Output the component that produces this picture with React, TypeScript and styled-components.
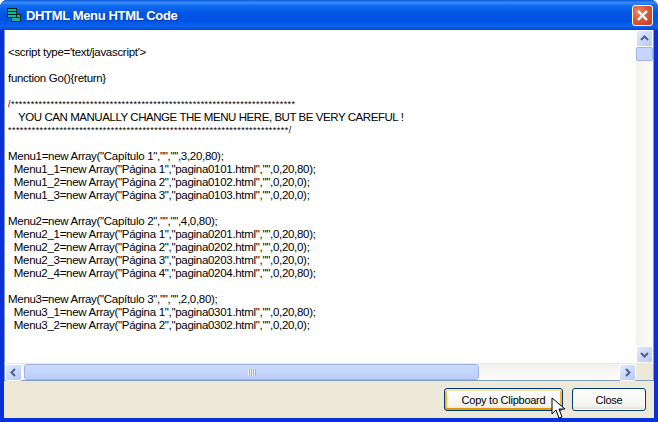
import React from "react";
import styled, { createGlobalStyle } from "styled-components";

const GlobalStyle = createGlobalStyle`
  * {
    box-sizing: border-box;
    margin: 0;
    padding: 0;
  }

  html, body, #root {
    width: 658px;
    height: 422px;
    overflow: hidden;
    background: #fff;
  }
`;

const Window = styled.div`
  position: relative;
  width: 658px;
  height: 422px;
  display: flex;
  flex-direction: column;
  border-radius: 7px 7px 0 0;
  overflow: hidden;
  background: #0831d9;
`;

const TitleBar = styled.div`
  height: 30px;
  flex: none;
  display: flex;
  align-items: center;
  gap: 4px;
  padding: 0 5px 0 6px;
  background: linear-gradient(
    180deg,
    #0a5be0 0%,
    #3c8cf6 9%,
    #0f6df0 18%,
    #0255e3 45%,
    #0054e3 70%,
    #0a62ef 88%,
    #0647cf 100%
  );
`;

const Title = styled.span`
  flex: 1;
  margin-top: 1px;
  color: #fff;
  font: bold 13px "Liberation Sans", Arial, sans-serif;
  letter-spacing: -0.35px;
  text-shadow: 1px 1px 0 #0b3cae;
`;

const CloseBox = styled.div`
  width: 21px;
  height: 21px;
  display: flex;
  align-items: center;
  justify-content: center;
  border: 1px solid #fff;
  border-radius: 3px;
  background: radial-gradient(circle at 30% 30%, #e98a68 0%, #d9583a 45%, #c23a18 100%);
`;

const Body = styled.div`
  flex: 1;
  min-height: 0;
  display: flex;
  flex-direction: column;
  margin: 0 4px 4px;
  background: #ece9d8;
`;

const ViewRow = styled.div`
  flex: 1;
  min-height: 0;
  display: flex;
  background: #fff;
  border-left: 1px solid #7f9db9;
  border-right: 1px solid #7f9db9;
`;

const Code = styled.div`
  flex: 1;
  overflow: hidden;
  padding: 3px 0 0 3px;
  background: #fff;
  color: #000;
  font: 11.5px/13px "Liberation Sans", Arial, sans-serif;
  letter-spacing: -0.3px;
  white-space: pre;
`;

const Stars = styled.div`
  font-size: 9px;
  line-height: 13px;
  letter-spacing: 0.45px;
`;

const Banner = styled.div`
  padding-left: 2px;
  letter-spacing: -0.44px;
`;

const VTrack = styled.div`
  width: 17px;
  flex: none;
  display: flex;
  flex-direction: column;
  background: linear-gradient(90deg, #f3f1ec 0%, #fdfdfa 100%);
`;

const VSpacer = styled.div`
  flex: 1;
`;

const ScrollBtn = styled.div`
  width: 17px;
  height: 17px;
  flex: none;
  display: flex;
  align-items: center;
  justify-content: center;
  border: 1px solid #fff;
  border-radius: 2px;
  background: linear-gradient(135deg, #e1eafe 0%, #c8d6fb 60%, #b4c8f6 100%);
`;

const VThumb = styled.div`
  width: 17px;
  height: 14px;
  flex: none;
  border: 1px solid #fff;
  outline: 1px solid #9db3e6;
  outline-offset: -1px;
  border-radius: 2px;
  background: #c5d5fb;
`;

const HRow = styled.div`
  height: 18px;
  flex: none;
  display: flex;
  background: #fdfdfa;
  border: 1px solid #7f9db9;
  border-top-color: #ece9d8;
`;

const HTrack = styled.div`
  flex: 1;
  display: flex;
  background: linear-gradient(180deg, #f3f1ec 0%, #fdfdfa 100%);
`;

const HThumb = styled.div`
  width: 455px;
  margin-left: 2px;
  display: flex;
  align-items: center;
  justify-content: center;
  gap: 1px;
  border: 1px solid #fff;
  outline: 1px solid #9db3e6;
  outline-offset: -1px;
  border-radius: 3px;
  background: linear-gradient(180deg, #cbdafd 0%, #c3d3fc 60%, #b9ccf8 100%);
`;

const Grip = styled.i`
  display: block;
  width: 1px;
  height: 7px;
  background: #eef4fe;
  box-shadow: 1px 0 0 #8cb0f8;
`;

const Corner = styled.div`
  width: 17px;
  flex: none;
  background: #ece9d8;
`;

const Footer = styled.div`
  height: 37px;
  flex: none;
  display: flex;
  justify-content: flex-end;
  align-items: center;
  gap: 9px;
  padding: 0 8px 0 0;
  background: #ece9d8;
`;

const Btn = styled.button<{ $focused?: boolean; $w: number }>`
  width: ${(p) => p.$w}px;
  height: 23px;
  border: 1px solid #003c74;
  border-radius: 3px;
  background: linear-gradient(180deg, #ffffff 0%, #f4f3ee 80%, #dcd8ce 100%);
  color: #000;
  font: 11px "Liberation Sans", Arial, sans-serif;
  letter-spacing: -0.25px;
  box-shadow: ${(p) =>
    p.$focused
      ? "inset 0 2px 0 #fbe2a6, inset 0 -2px 0 #e59700, inset 2px 0 0 #f8b636, inset -2px 0 0 #f8b636"
      : "inset 0 0 0 1px #fff"};
`;

const Pointer = styled.svg`
  position: absolute;
  left: 551px;
  top: 397px;
`;

const codeLines = [
  "",
  "<script type='text/javascript'>",
  "",
  "function Go(){return}",
  "",
];

const arrayLines = [
  `Menu1=new Array("Capítulo 1","","",3,20,80);`,
  `  Menu1_1=new Array("Página 1","pagina0101.html","",0,20,80);`,
  `  Menu1_2=new Array("Página 2","pagina0102.html","",0,20,0);`,
  `  Menu1_3=new Array("Página 3","pagina0103.html","",0,20,0);`,
  "",
  `Menu2=new Array("Capítulo 2","","",4,0,80);`,
  `  Menu2_1=new Array("Página 1","pagina0201.html","",0,20,80);`,
  `  Menu2_2=new Array("Página 2","pagina0202.html","",0,20,0);`,
  `  Menu2_3=new Array("Página 3","pagina0203.html","",0,20,0);`,
  `  Menu2_4=new Array("Página 4","pagina0204.html","",0,20,80);`,
  "",
  `Menu3=new Array("Capítulo 3","","",2,0,80);`,
  `  Menu3_1=new Array("Página 1","pagina0301.html","",0,20,80);`,
  `  Menu3_2=new Array("Página 2","pagina0302.html","",0,20,0);`,
];

const Chevron = ({ d }: { d: string }) => (
  <svg width="9" height="9" viewBox="0 0 9 9">
    <path d={d} fill="none" stroke="#4d6185" strokeWidth="2" />
  </svg>
);

const AppIcon = () => (
  <svg width="16" height="16" viewBox="0 0 16 16">
    <rect x="1.5" y="1.5" width="9" height="3" fill="#12b59c" stroke="#03281f" />
    <rect x="1.5" y="4.5" width="9" height="3" fill="#12b59c" stroke="#03281f" />
    <rect x="1.5" y="7.5" width="9" height="3" fill="#12b59c" stroke="#03281f" />
    <rect x="5.5" y="10.5" width="9" height="4" fill="#12b59c" stroke="#03281f" />
    <rect x="10.5" y="7.5" width="4" height="3" fill="#12b59c" stroke="#03281f" />
  </svg>
);

export default function App() {
  return (
    <>
      <GlobalStyle />
      <Window>
        <TitleBar>
          <AppIcon />
          <Title>DHTML Menu HTML Code</Title>
          <CloseBox>
            <svg width="13" height="13" viewBox="0 0 13 13">
              <path d="M2 2 L11 11 M11 2 L2 11" stroke="#fff" strokeWidth="2.4" />
            </svg>
          </CloseBox>
        </TitleBar>
        <Body>
          <ViewRow>
            <Code>
              {codeLines.map((l, i) => (
                <div key={i}>{l || " "}</div>
              ))}
              <Stars>/{"*".repeat(72)}</Stars>
              <Banner>{"   YOU CAN MANUALLY CHANGE THE MENU HERE, BUT BE VERY CAREFUL !"}</Banner>
              <Stars>{"*".repeat(71)}/</Stars>
              <div> </div>
              {arrayLines.map((l, i) => (
                <div key={i}>{l || " "}</div>
              ))}
            </Code>
            <VTrack>
              <ScrollBtn>
                <Chevron d="M1 6 L4.5 2.5 L8 6" />
              </ScrollBtn>
              <VThumb />
              <VSpacer />
              <ScrollBtn>
                <Chevron d="M1 3 L4.5 6.5 L8 3" />
              </ScrollBtn>
            </VTrack>
          </ViewRow>
          <HRow>
            <ScrollBtn>
              <Chevron d="M6 1 L2.5 4.5 L6 8" />
            </ScrollBtn>
            <HTrack>
              <HThumb>
                <Grip />
                <Grip />
                <Grip />
                <Grip />
              </HThumb>
            </HTrack>
            <ScrollBtn>
              <Chevron d="M3 1 L6.5 4.5 L3 8" />
            </ScrollBtn>
            <Corner />
          </HRow>
          <Footer>
            <Btn $focused $w={119}>Copy to Clipboard</Btn>
            <Btn $w={74}>Close</Btn>
          </Footer>
        </Body>
        <Pointer width="16" height="23" viewBox="0 0 16 23">
          <path
            d="M1 1 L1 17 L5 13 L8 21 L11 20 L8 12 L14 12 Z"
            fill="#fff"
            stroke="#000"
            strokeWidth="1"
          />
        </Pointer>
      </Window>
    </>
  );
}
